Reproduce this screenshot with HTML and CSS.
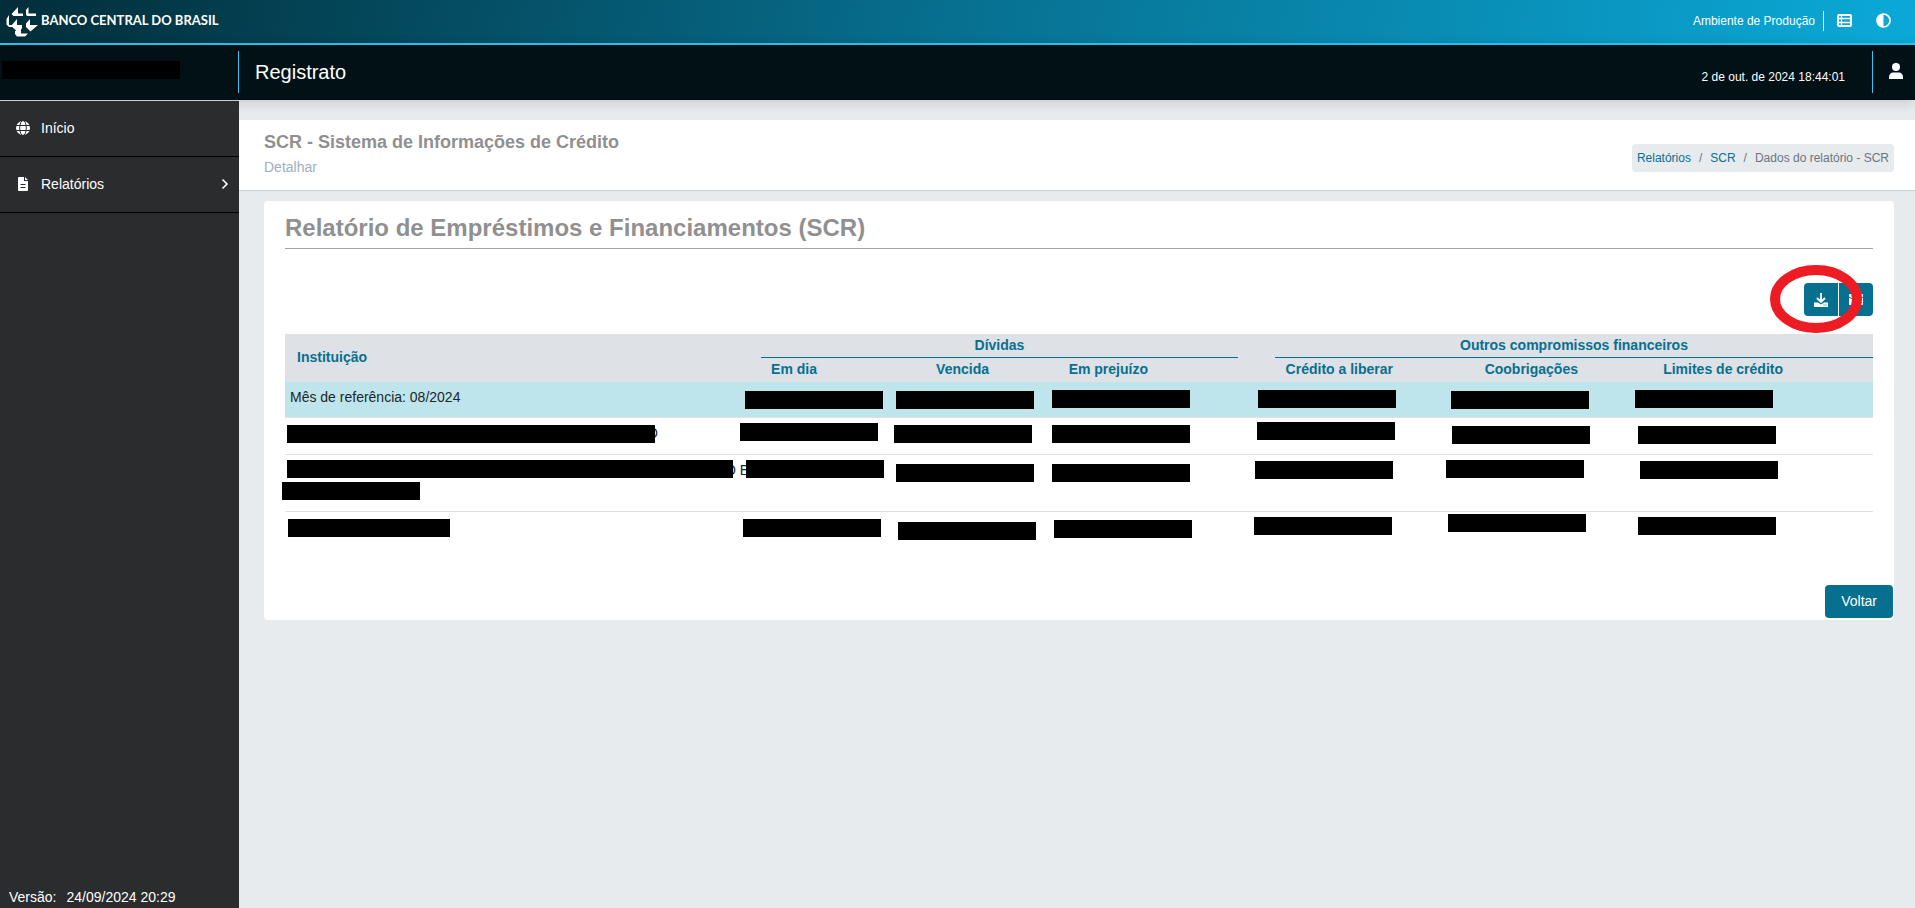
FILE: index.html
```html
<!DOCTYPE html>
<html lang="pt-BR">
<head>
<meta charset="utf-8">
<title>Registrato</title>
<link rel="stylesheet" href="styles.css">
</head>
<body>
<header class="topbar">
  <a class="brand" href="#">
    <svg width="32" height="30" viewBox="0 0 32 30" fill="#fff" aria-hidden="true">
      <path d="M12 0v6.500h5V9H7.500L5.500 7zM22.500 0v6.500H30V9h-9l-1-1.500V3zM3 8v10h5.500v2H3L.5 17.500V12zM11 12v6h5v3.500L12 25l-7-6zM24 12v6h8l-7.500 6.500L20 20v-3.500zM15 21.500v5h7l-3 3h-8l-2-2.500v-3z"/>
    </svg>
    <span>BANCO CENTRAL DO BRASIL</span>
  </a>
  <div class="tools">
    <span class="env">Ambiente de Produção</span>
    <button class="icon" aria-label="Lista">
      <svg width="15" height="13" viewBox="0 0 15 13" fill="none" stroke="#fff"><rect x="1" y="1" width="13" height="11" rx="1" stroke-width="2"/><path d="M1 4.500h13M1 8.500h13M4.500 1v11" stroke-width="1.300"/></svg>
    </button>
    <button class="icon" aria-label="Contraste">
      <svg width="15" height="15" viewBox="0 0 15 15"><circle cx="7.500" cy="7.500" r="6.500" fill="none" stroke="#fff" stroke-width="1.700"/><path d="M7.500 1a6.500 6.500 0 0 0 0 13z" fill="#fff"/></svg>
    </button>
  </div>
</header>
<div class="appbar">
  <div class="account"><span class="redacted"></span></div>
  <h1 class="app">Registrato</h1>
  <time class="clock">2 de out. de 2024 18:44:01</time>
  <button class="user" aria-label="Usuário">
    <svg width="14" height="16" viewBox="0 0 14 16" fill="#fff"><circle cx="7" cy="4" r="4"/><path d="M0 16v-2c0-3 2-4.500 4-4.500h6c2 0 4 1.500 4 4.500v2z"/></svg>
  </button>
</div>
<div class="shell">
  <nav class="sidebar">
    <a class="item" href="#">
      <svg width="14" height="14" viewBox="0 0 14 14"><circle cx="7" cy="7" r="7" fill="#fff"/><path d="M0 4.500h14M0 9.500h14" stroke="#2b2c2e" stroke-width="1"/><ellipse cx="7" cy="7" rx="3.300" ry="7.500" fill="none" stroke="#2b2c2e"/></svg>
      <span>Início</span>
    </a>
    <a class="item" href="#">
      <svg width="14" height="14" viewBox="0 0 14 14"><path d="M3 0h5v4h4v9a1 1 0 0 1-1 1H3a1 1 0 0 1-1-1V1a1 1 0 0 1 1-1zM9 0l3 3H9z" fill="#fff"/><path d="M4.500 7.500h5M4.500 10.500h5" stroke="#2b2c2e"/></svg>
      <span>Relatórios</span>
      <svg class="arrow" width="8" height="12" viewBox="0 0 8 12" fill="none" stroke="#fff" stroke-width="1.600"><path d="M1.500 1.500 6 6l-4.500 4.500"/></svg>
    </a>
    <div class="version"><span>Versão:</span><span>24/09/2024 20:29</span></div>
  </nav>
  <main class="main">
    <div class="pagehead">
      <div>
        <h2 class="system">SCR - Sistema de Informações de Crédito</h2>
        <p class="action">Detalhar</p>
      </div>
      <nav class="crumbs"><a href="#">Relatórios</a><span>/</span><a href="#">SCR</a><span>/</span><span>Dados do relatório - SCR</span></nav>
    </div>
    <section class="panel">
      <h3 class="title">Relatório de Empréstimos e Financiamentos (SCR)</h3>
      <div class="exports">
        <button class="btn first" aria-label="Baixar"><svg width="14" height="14" viewBox="0 0 14 14"><path d="M0 9.500h4l3 2 3-2h4V14H0z" fill="#fff"/><path d="M7 0v9M3 5l4 4 4-4" fill="none" stroke="#fff" stroke-width="1.800"/><path d="M9.500 12h1M11.500 12h1" stroke="#077090"/></svg></button>
        <button class="btn last" aria-label="Enviar por e-mail"><svg width="14" height="11" viewBox="0 0 14 11"><rect width="14" height="11" rx="1" fill="#fff"/><path d="M0 3l7 4.500L14 3" fill="none" stroke="#077090"/></svg></button>
      </div>
      <table class="report">
        <colgroup><col><col class="c68"><col class="c172"><col class="c159"><col class="c78"><col class="c37"><col class="c130"><col class="c185"><col class="c205"><col class="c78"></colgroup>
        <thead>
          <tr><th class="inst" rowspan="2">Instituição</th><th class="group" colspan="4">Dívidas</th><th></th><th class="group" colspan="4">Outros compromissos financeiros</th></tr>
          <tr><th>Em dia</th><th>Vencida</th><th>Em prejuízo</th><th></th><th></th><th>Crédito a liberar</th><th>Coobrigações</th><th>Limites de crédito</th><th></th></tr>
        </thead>
        <tbody>
          <tr class="month"><td colspan="10">Mês de referência: 08/2024</td></tr>
          <tr><td colspan="10"><span class="hidden-name short"></span>O</td></tr>
          <tr class="tall"><td colspan="10"><span class="hidden-name long"></span>O E</td></tr>
          <tr><td colspan="10"></td></tr>
        </tbody>
      </table>
      <div class="footer"><button class="btn back">Voltar</button></div>
      <svg class="marks" width="1630" height="420" viewBox="264 201 1630 420" aria-hidden="true">
        <g fill="#000">
          <path d="M287 425h368v18H287zM287 460h446v18H287zM282 482h138v18H282zM288 519h162v18H288z"/>
          <path d="M745 391h138v18H745zM896 391h138v18H896zM1052 390h138v18h-138zM1258 390h138v18h-138zM1451 391h138v18h-138zM1635 390h138v18h-138z"/>
          <path d="M740 423h138v18H740zM894 425h138v18H894zM1052 425h138v18h-138zM1257 422h138v18h-138zM1452 426h138v18h-138zM1638 426h138v18h-138z"/>
          <path d="M746 460h138v18H746zM896 464h138v18H896zM1052 464h138v18h-138zM1255 461h138v18h-138zM1446 460h138v18h-138zM1640 461h138v18h-138z"/>
          <path d="M743 519h138v18H743zM898 522h138v18H898zM1054 520h138v18h-138zM1254 517h138v18h-138zM1448 514h138v18h-138zM1638 517h138v18h-138z"/>
        </g>
        <ellipse cx="1816" cy="299" rx="41" ry="29" fill="none" stroke="#ed1c24" stroke-width="10"/>
      </svg>
    </section>
  </main>
</div>
</body>
</html>
```
FILE: styles.css
```css
* { box-sizing: border-box; }
body {
  margin: 0;
  min-height: 100vh;
  display: flex;
  flex-direction: column;
  font: 14px/20px "Liberation Sans", Arial, sans-serif;
  color: #212529;
  background: #e7ebee;
}
h1, h2, h3, p { margin: 0; }
a { color: inherit; text-decoration: none; }
button { font: inherit; color: #fff; border: 0; padding: 0; background: none; cursor: pointer; }
svg { display: block; flex: none; }

.topbar {
  height: 45px;
  display: flex;
  justify-content: space-between;
  align-items: center;
  padding: 0 24px 2px 6px;
  border-bottom: 2px solid #36c3f2;
  background: linear-gradient(100deg, #022d39, #077090 50%, #0ba9d8);
  color: #fff;
}
.brand { display: flex; align-items: center; gap: 3px; padding-top: 2px; font: bold 13px/16px Lato, sans-serif; }
.brand span { padding-bottom: 4px; }
.tools { display: flex; align-items: center; }
.env { font-size: 12px; line-height: 20px; padding-right: 8px; border-right: 1px solid #fff; }
.icon { display: flex; margin-left: 13px; }
.icon + .icon { margin-left: 24px; }

.appbar {
  height: 55px;
  display: flex;
  align-items: center;
  padding-bottom: 2px;
  color: #fff;
  background: #011116;
  box-shadow: 0 2px 12px rgba(0, 0, 0, .15);
  position: relative;
}
.account { width: 239px; height: 42px; padding: 10px 2px; border-right: 1px solid #36c3f2; }
.redacted { display: block; width: 178px; height: 18px; background: #000; }
.app { flex: 1; padding-left: 16px; font-size: 20px; font-weight: normal; line-height: 30px; }
.clock { font-size: 12px; padding: 10px 27px 0 0; }
.user { height: 42px; padding: 0 12px 2px 16px; border-left: 1px solid #36c3f2; }

.shell { flex: 1; display: flex; }
.sidebar {
  width: 239px;
  flex: none;
  display: flex;
  flex-direction: column;
  color: #fff;
  background: #2b2c2e;
  border-top: 1px solid #c8ced3;
  position: relative;
}
.item { display: flex; align-items: center; gap: 11px; height: 56px; padding: 0 10px 2px 16px; border-bottom: 1px solid #000; }
.arrow { margin-left: auto; }
.version { display: flex; gap: 10px; margin-top: auto; padding: 0 9px 1px; }

.main { flex: 1; min-width: 0; padding-top: 20px; }
.pagehead {
  display: flex;
  justify-content: space-between;
  align-items: flex-start;
  height: 71px;
  padding: 10px 21px 0 25px;
  background: #fff;
  border-bottom: 1px solid #c8ced3;
}
.system { font-size: 18px; line-height: 24px; color: #909090; }
.action { padding-top: 3px; color: #a0afbb; }
.crumbs { display: flex; gap: 8px; margin-top: 14px; padding: 4px 5px; border-radius: 4px; background: #e7ebee; color: #6c757d; font-size: 12px; line-height: 20px; }
.crumbs a { color: #077090; }

.panel { position: relative; margin: 10px 21px 0 25px; padding: 9px 21px 2px; border-radius: 4px; background: #fff; }
.title { font-size: 24px; line-height: 36px; padding-bottom: 2px; color: #909090; border-bottom: 1px solid #a5a5a5; }
.exports { display: flex; justify-content: flex-end; gap: 1px; padding: 34px 0 18px; }
.btn { height: 33px; background: #077090; border-radius: 4px; }
.first, .last { width: 34px; display: flex; align-items: center; justify-content: center; }
.first { border-radius: 4px 0 0 4px; }
.last { border-radius: 0 4px 4px 0; }

.report { width: 100%; table-layout: fixed; border-collapse: separate; border-spacing: 0; }
.c37 { width: 37px; }
.c68 { width: 68px; }
.c78 { width: 78px; }
.c130 { width: 130px; }
.c159 { width: 159px; }
.c172 { width: 172px; }
.c185 { width: 185px; }
.c205 { width: 205px; }
.report th { height: 24px; padding: 0 12px 2px 0; line-height: 22px; text-align: right; white-space: nowrap; color: #077090; background: #dee1e6; }
.report .group { padding: 0 0 1px; text-align: center; border-bottom: 1px solid #077090; }
.report .inst { padding: 0 12px 2px; text-align: left; }
.report td { height: 37px; padding: 5px; vertical-align: top; border-bottom: 1px solid #dee1e6; }
.report .month td { height: 36px; background: #bde5eb; }
.report .tall td { height: 57px; }
.report tr:last-child td { border-bottom: 0; }
.hidden-name { display: inline-block; }
.short { width: 357px; }
.long { width: 435px; }
.footer { display: flex; justify-content: flex-end; margin: 36px -20px 0 0; }
.back { padding: 0 16px 1px; }
.marks { position: absolute; top: 0; right: 0; overflow: visible; pointer-events: none; }
```
